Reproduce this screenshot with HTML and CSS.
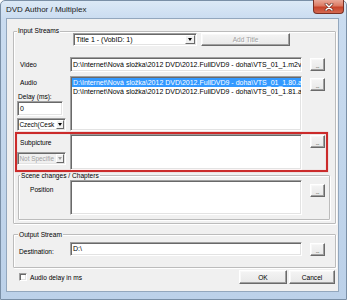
FILE: index.html
```html
<!DOCTYPE html>
<html>
<head>
<meta charset="utf-8">
<link rel="stylesheet" href="styles.css">
</head>
<body>
<div class="window">
  <div class="titlebar">
    <span class="title">DVD Author / Multiplex</span>
    <span class="close">
      <svg width="10" height="8" viewBox="0 0 10 8"><path d="M2 1 L8 7 M8 1 L2 7" stroke="#5a1a10" stroke-width="2.6" stroke-linecap="round"/><path d="M2 1 L8 7 M8 1 L2 7" stroke="#fff" stroke-width="1.5" stroke-linecap="round"/></svg>
    </span>
  </div>
  <div class="client">
    <div class="group input-group">
      <div class="row-title">
        <span class="legend">Input Streams</span>
        <div class="combo title-combo"><span class="combo-text">Title 1 - (VobID: 1)</span><span class="drop"><span class="tri"></span></span></div>
        <button class="btn add-title" disabled>Add Title</button>
      </div>
      <div class="grid row-video">
        <span class="label lbl-video">Video</span>
        <div class="edit path">D:\Internet\Nová složka\2012 DVD\2012.FullDVD9 - doha\VTS_01_1.m2v</div>
        <span></span>
        <button class="btn dots dots-video">...</button>
      </div>
      <div class="grid row-audio">
        <div class="side">
          <span class="label lbl-audio">Audio</span>
          <span class="label lbl-delay">Delay (ms):</span>
          <div class="edit small-edit">0</div>
          <div class="combo small-combo"><span class="combo-text">Czech(Cesk</span><span class="drop"><span class="tri"></span></span></div>
        </div>
        <div class="edit list">
          <div class="item sel">D:\Internet\Nová složka\2012 DVD\2012.FullDVD9 - doha\VTS_01_1.80.a</div>
          <div class="item">D:\Internet\Nová složka\2012 DVD\2012.FullDVD9 - doha\VTS_01_1.81.a</div>
        </div>
        <span></span>
        <button class="btn dots dots-audio">...</button>
      </div>
      <div class="grid row-sub">
        <div class="side">
          <span class="label lbl-sub">Subpicture</span>
          <div class="combo small-combo sub-combo disabled"><span class="combo-text">Not Specifie</span><span class="drop"><span class="tri"></span></span></div>
        </div>
        <div class="edit list sub-list"></div>
        <span></span>
        <button class="btn dots dots-sub">...</button>
        <div class="highlight"></div>
      </div>
      <div class="group scene-group">
        <span class="legend legend-scene">Scene changes / Chapters</span>
        <div class="grid scene-row">
          <span class="label lbl-pos">Position</span>
          <div class="edit pos-list"></div>
          <span></span>
          <button class="btn dots dots-pos">...</button>
        </div>
      </div>
    </div>
    <div class="group output-group">
      <span class="legend legend-out">Output Stream</span>
      <div class="grid dest-row">
        <span class="label lbl-dest">Destination:</span>
        <div class="edit path dest-edit">D:\</div>
        <span></span>
        <button class="btn dots dots-dest">...</button>
      </div>
    </div>
    <div class="bottom-row">
      <span class="checkbox"></span>
      <span class="check-label">Audio delay in ms</span>
      <button class="btn ok">OK</button>
      <button class="btn cancel">Cancel</button>
    </div>
  </div>
</div>
</body>
</html>
```
FILE: styles.css
```css
* { box-sizing: border-box; margin: 0; padding: 0; }
html, body { width: 347px; height: 300px; overflow: hidden; background: #fff; }
body {
  font-family: "Liberation Sans", Arial, sans-serif;
  font-size: 6.6px;
  line-height: 9px;
  color: #000;
}
.window {
  width: 347px;
  height: 300px;
  background: linear-gradient(#dce9f6 0, #cadcf0 18px, #c1d5eb 60%, #bcd1e9 100%);
  border: 1px solid #7a8fa6;
  border-radius: 5px 5px 0 0;
  padding: 0 7px 7px 5px;
  display: flex;
  flex-direction: column;
}
.titlebar {
  height: 17px;
  display: flex;
  align-items: flex-start;
  flex: none;
}
.title {
  font-size: 8px;
  line-height: 10px;
  margin-top: 4px;
  color: #1a1a1a;
}
.close {
  margin-left: auto;
  margin-right: -5px;
  margin-top: -1px;
  width: 31px;
  height: 14px;
  border: 1px solid #7a3024;
  border-top: none;
  border-radius: 0 0 4px 4px;
  background: linear-gradient(#e9a898 0, #dc7a63 45%, #c7432a 55%, #d46a52 100%);
  display: flex;
  align-items: center;
  justify-content: center;
}
.close svg { display: block; }
.client {
  flex: 1;
  background: #f0f0f0;
  border: 1px solid #93a7bd;
  padding: 0 2px 0 6px;
  display: flex;
  flex-direction: column;
}
.group {
  border: 1px solid #bcbcbc;
  box-shadow: 1px 1px 0 #fff, inset 1px 1px 0 #fff;
  border-radius: 1px;
}
.input-group {
  margin-top: 12px;
  padding-bottom: 3px;
}
.legend {
  background: #f0f0f0;
  padding: 0 1px;
  white-space: nowrap;
}
.row-title {
  display: flex;
  align-items: flex-start;
}
.row-title .legend {
  margin-top: -6px;
  margin-left: 3px;
}
.title-combo {
  margin-left: 13px;
  margin-top: 1px;
  width: 124px;
  height: 13px;
}
.add-title {
  margin-left: 4px;
  margin-top: 1px;
  width: 89px;
  height: 13px;
}
.grid {
  display: grid;
  grid-template-columns: 56px 232px 8px 15px;
  align-items: start;
}
.label { white-space: nowrap; }
.edit {
  background: #fff;
  border: 1px solid;
  border-color: #a0a0a0 #fff #fff #a0a0a0;
  box-shadow: inset 1px 1px 0 #696969, inset -1px -1px 0 #e3e3e3;
  overflow: hidden;
  white-space: nowrap;
}
.path {
  font-size: 7px;
  line-height: 13px;
  padding-left: 2px;
}
.btn {
  font-family: inherit;
  font-size: 6.6px;
  line-height: 9px;
  color: #000;
  background: linear-gradient(#f4f4f4, #e8e8e8);
  border: 1px solid;
  border-color: #fff #6a6a6a #6a6a6a #fff;
  box-shadow: inset -1px -1px 0 #a0a0a0, inset 1px 1px 0 #f8f8f8;
  display: flex;
  align-items: center;
  justify-content: center;
  padding: 0;
}
.btn:disabled { color: #a0a0a0; text-shadow: 1px 1px 0 #fff; }
.dots {
  width: 15px;
  height: 13px;
  font-size: 5px;
  letter-spacing: -0.3px;
  padding-top: 3px;
}
.row-video { margin-top: 11px; }
.row-video .edit { height: 15px; }
.lbl-video { padding-left: 6px; margin-top: 3px; }
.dots-video { margin-top: 1px; }
.row-audio { margin-top: 4px; }
.side {
  display: flex;
  flex-direction: column;
  align-items: flex-start;
}
.lbl-audio { margin-top: 2px; padding-left: 6px; }
.lbl-delay { margin-top: 5px; padding-left: 4px; }
.small-edit {
  margin-left: 3px;
  width: 46px;
  height: 15px;
  font-size: 7px;
  line-height: 13px;
  padding-left: 2px;
}
.small-combo {
  margin-left: 3px;
  margin-top: 2px;
  width: 49px;
  height: 13px;
}
.list {
  height: 55px;
  padding: 1px 0 0 1px;
  font-size: 7px;
  line-height: 9px;
}
.item {
  padding-left: 1px;
  white-space: nowrap;
  overflow: hidden;
}
.item.sel { background: #3399ff; color: #fff; }
.dots-audio { margin-top: 2px; }
.combo {
  background: #fff;
  border: 1px solid;
  border-color: #a0a0a0 #fff #fff #a0a0a0;
  box-shadow: inset 1px 1px 0 #696969, inset -1px -1px 0 #e3e3e3;
  display: flex;
  align-items: stretch;
  overflow: hidden;
  padding: 1px;
}
.combo-text {
  flex: 1;
  font-size: 7px;
  line-height: 10px;
  padding-left: 1px;
  white-space: nowrap;
  overflow: hidden;
}
.drop {
  flex: none;
  width: 10px;
  background: #f0f0f0;
  border: 1px solid;
  border-color: #fff #6a6a6a #6a6a6a #fff;
  display: flex;
  align-items: center;
  justify-content: center;
}
.tri {
  width: 0;
  height: 0;
  border-left: 2.5px solid transparent;
  border-right: 2.5px solid transparent;
  border-top: 3px solid #000;
}
.small-combo .combo-text { font-size: 6.4px; padding-left: 0.5px; }
.small-combo .drop { width: 8px; }
.combo.disabled { background: #f0f0f0; }
.combo.disabled .combo-text { color: #a0a0a0; }
.combo.disabled .tri { border-top-color: #a0a0a0; }
.row-sub { margin-top: 3px; position: relative; }
.lbl-sub { margin-top: 4px; padding-left: 6px; }
.sub-combo { margin-top: 5px; }
.sub-list { height: 36px; }
.dots-sub { margin-top: 1px; }
.highlight {
  position: absolute;
  left: 1px;
  top: -2px;
  width: 313px;
  height: 40px;
  border: 2px solid #cb2b2b;
  box-shadow: 0 0 1px rgba(220, 60, 60, 0.5), inset 0 0 1px rgba(220, 60, 60, 0.5);
  pointer-events: none;
}
.scene-group {
  margin-top: 5px;
  margin-left: 4px;
  width: 312px;
  padding-bottom: 4px;
}
.legend-scene, .legend-out {
  display: block;
  width: max-content;
  margin-left: 1px;
  margin-top: -5px;
}
.scene-row { grid-template-columns: 51px 232px 8px 15px; }
.lbl-pos { padding-left: 11px; margin-top: 5px; }
.pos-list { height: 35px; }
.dots-pos { margin-top: 4px; }
.output-group {
  margin-top: 10px;
  padding-bottom: 11px;
}
.legend-out { margin-left: 4px; }
.dest-row { margin-top: 3px; }
.lbl-dest { padding-left: 5px; margin-top: 5px; }
.dest-edit { height: 14px; line-height: 12px; }
.dots-dest { margin-top: 1px; }
.bottom-row {
  display: flex;
  align-items: flex-start;
}
.checkbox {
  margin-top: 5px;
  margin-left: 6px;
  width: 8px;
  height: 8px;
  background: #fff;
  border: 1px solid;
  border-color: #a0a0a0 #fff #fff #a0a0a0;
  box-shadow: inset 1px 1px 0 #696969, inset -1px -1px 0 #e3e3e3;
}
.check-label {
  margin-left: 3px;
  margin-top: 5px;
}
.ok {
  margin-left: auto;
  margin-top: 2px;
  width: 48px;
  height: 14px;
}
.cancel {
  margin-left: 2px;
  margin-top: 2px;
  margin-right: 1px;
  width: 46px;
  height: 14px;
}
```
